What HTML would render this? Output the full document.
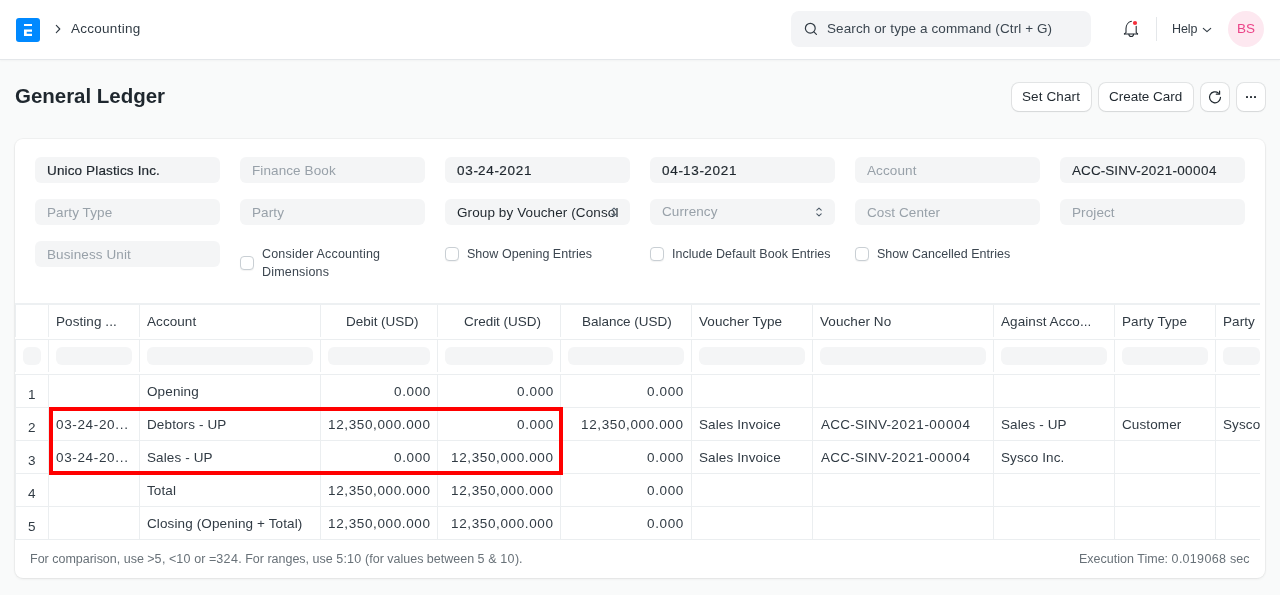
<!DOCTYPE html>
<html>
<head>
<meta charset="utf-8">
<style>
*{box-sizing:border-box;margin:0;padding:0}
html,body{width:1280px;height:595px;overflow:hidden}
body{background:#f9fafa;font-family:"Liberation Sans",sans-serif;color:#1f272e;position:relative}
div,span{white-space:nowrap}
.a{position:absolute;will-change:transform}
.navbar{position:absolute;left:0;top:0;width:1280px;height:60px;background:#fff;border-bottom:1px solid #e4e7ea;box-shadow:0 1px 2px rgba(0,0,0,.03)}
.t13{font-size:13px;line-height:16px}
.t12{font-size:12px;line-height:14px}
.btn{position:absolute;top:83px;height:28px;background:#fff;border-radius:7px;box-shadow:0 0 0 1px rgba(31,39,46,.10),0 1px 2px rgba(0,0,0,.06)}
.card{position:absolute;left:15px;top:139px;width:1250px;height:439px;background:#fff;border-radius:8px;box-shadow:0 0 0 1px rgba(0,0,0,.03),0 1px 3px rgba(0,0,0,.07)}
.inp{position:absolute;width:185px;height:26px;border-radius:6px;background:#f4f5f6}
.ph{color:#a0a8b0}
.cb{position:absolute;width:14px;height:14px;border:1px solid #c9cfd4;border-radius:4px;background:#fff;box-shadow:0 1px 1px rgba(0,0,0,.05)}
.lbl{color:#3c4650}
.hl{position:absolute;background:#ebeef0}
.vl{position:absolute;background:#ebeef0;width:1px}
.pill{position:absolute;height:18px;border-radius:6px;background:#f4f5f6}
.txt{color:#313b44}
</style>
</head>
<body>
<div class="navbar"></div>
<svg class="a" style="left:16px;top:18px" width="24" height="24" viewBox="0 0 24 24"><rect width="24" height="24" rx="3" fill="#0089ff"/><path fill="#fff" d="M8 6h8v2H8zM8 11.5h8v2.2H10.7v2.1H16V18H8z"/></svg>
<svg class="a" style="left:50px;top:20px" width="16" height="18" viewBox="0 0 16 18"><path d="M6.3 5.3L9.8 9L6.3 12.7" fill="none" stroke="#313b44" stroke-width="1.1" stroke-linecap="round" stroke-linejoin="round"/></svg>
<div class="a" style="left:71px;top:21px;font-size:13.5px;line-height:16px;color:#313b44;letter-spacing:0.27px">Accounting</div>
<div class="a" style="left:791px;top:11px;width:300px;height:36px;border-radius:8px;background:#f3f4f6"></div>
<svg class="a" style="left:800px;top:18px" width="20" height="20" viewBox="0 0 20 20"><circle cx="10.3" cy="10.2" r="4.9" fill="none" stroke="#313b44" stroke-width="1.2"/><path d="M13.9 13.8l2.5 2.5" stroke="#313b44" stroke-width="1.2" stroke-linecap="round"/></svg>
<div class="a" style="left:827px;top:21px;font-size:13.5px;line-height:16px;color:#3b4650;letter-spacing:0.1px">Search or type a command (Ctrl + G)</div>
<svg class="a" style="left:1118px;top:14px" width="30" height="30" viewBox="0 0 30 30"><g fill="none" stroke="#1f272e" stroke-width="1.05" stroke-linecap="round" stroke-linejoin="round"><path d="M6.4 19.9L8 18.6V14.5C8 11.3 10.1 8.1 13.4 7.3"/><path d="M18.2 12.2V18.6L19.6 19.9"/><path d="M6.4 19.9H19.6"/><path d="M10.9 20.3a2.3 2.3 0 0 0 4.6 0"/></g><circle cx="17" cy="9" r="2.1" fill="#f52f3a"/></svg>
<div class="a" style="left:1156px;top:17px;width:1px;height:24px;background:#e4e7ea"></div>
<div class="a" style="left:1172px;top:22px;font-size:12.5px;line-height:15px;color:#313b44;letter-spacing:-0.11px">Help</div>
<svg class="a" style="left:1200px;top:24px" width="14" height="10" viewBox="0 0 14 10"><path d="M3.3 4.3l3.7 3.4l3.7-3.4" fill="none" stroke="#313b44" stroke-width="1.1" stroke-linecap="round" stroke-linejoin="round"/></svg>
<div class="a" style="left:1228px;top:11px;width:36px;height:36px;border-radius:50%;background:#fde8f0"></div>
<div class="a" style="left:1237px;top:21px;font-size:13.5px;line-height:16px;color:#ec4388;letter-spacing:0.12px">BS</div>
<div class="a" style="left:15px;top:84px;font-size:20.5px;line-height:23.5px;color:#1f272e;letter-spacing:-0.03px;font-weight:700;line-height:23px">General Ledger</div>
<div class="btn" style="left:1012px;width:79px"></div>
<div class="a" style="left:1022px;top:89px;font-size:13.5px;line-height:16px;color:#1f272e;letter-spacing:0.12px">Set Chart</div>
<div class="btn" style="left:1099px;width:94px"></div>
<div class="a" style="left:1109px;top:89px;font-size:13.5px;line-height:16px;color:#1f272e;letter-spacing:-0.03px">Create Card</div>
<div class="btn" style="left:1201px;width:28px"></div>
<svg class="a" style="left:1200px;top:83px" width="29" height="28" viewBox="0 0 29 28"><path d="M20.5 14.3A5.5 5.5 0 1 1 18.54 10.09" fill="none" stroke="#1f272e" stroke-width="1.2" stroke-linecap="round"/><path d="M16.3 11.2H19.6V8.2" fill="none" stroke="#1f272e" stroke-width="1.2" stroke-linecap="round" stroke-linejoin="round"/></svg>
<div class="btn" style="left:1237px;width:28px"></div>
<svg class="a" style="left:1236px;top:83px" width="29" height="28" viewBox="0 0 29 28"><rect x="10" y="13" width="2" height="2" rx="0.4" fill="#1f272e"/><rect x="14" y="13" width="2" height="2" rx="0.4" fill="#1f272e"/><rect x="18" y="13" width="2" height="2" rx="0.4" fill="#1f272e"/></svg>
<div class="card"></div>
<div class="inp" style="left:35px;top:157px"></div>
<div class="a" style="left:47px;top:163px;font-size:13.5px;line-height:16px;color:#1f272e;letter-spacing:0.14px;-webkit-text-stroke:0.2px #1f272e">Unico Plastics Inc.</div>
<div class="inp" style="left:240px;top:157px"></div>
<div class="a" style="left:252px;top:163px;font-size:13.5px;line-height:16px;color:#98a1a9;letter-spacing:0.1px">Finance Book</div>
<div class="inp" style="left:445px;top:157px"></div>
<div class="a" style="left:457px;top:163px;font-size:13.5px;line-height:16px;color:#1f272e;letter-spacing:0.14px;-webkit-text-stroke:0.2px #1f272e"><span style="letter-spacing:0.72px">03</span>-<span style="letter-spacing:0.72px">24</span>-<span style="letter-spacing:0.72px">2021</span></div>
<div class="inp" style="left:650px;top:157px"></div>
<div class="a" style="left:662px;top:163px;font-size:13.5px;line-height:16px;color:#1f272e;letter-spacing:0.14px;-webkit-text-stroke:0.2px #1f272e"><span style="letter-spacing:0.72px">04</span>-<span style="letter-spacing:0.72px">13</span>-<span style="letter-spacing:0.72px">2021</span></div>
<div class="inp" style="left:855px;top:157px"></div>
<div class="a" style="left:867px;top:163px;font-size:13.5px;line-height:16px;color:#98a1a9;letter-spacing:0.1px">Account</div>
<div class="inp" style="left:1060px;top:157px"></div>
<div class="a" style="left:1072px;top:163px;font-size:13.5px;line-height:16px;color:#1f272e;letter-spacing:0.07px;-webkit-text-stroke:0.1px #1f272e">ACC-SINV-<span style="letter-spacing:0.42px">2021</span>-<span style="letter-spacing:0.42px">00004</span></div>
<div class="inp" style="left:35px;top:199px"></div>
<div class="a" style="left:47px;top:205px;font-size:13.5px;line-height:16px;color:#98a1a9;letter-spacing:0.1px">Party Type</div>
<div class="inp" style="left:240px;top:199px"></div>
<div class="a" style="left:252px;top:205px;font-size:13.5px;line-height:16px;color:#98a1a9;letter-spacing:0.1px">Party</div>
<div class="inp" style="left:445px;top:199px"></div>
<div class="a" style="left:457px;top:205px;width:161px;overflow:hidden;font-size:13.5px;line-height:16px;color:#1f272e;letter-spacing:0.1px">Group by Voucher (Consol</div>
<svg class="a" style="left:607px;top:205px" width="14" height="14" viewBox="0 0 14 14"><path d="M4.8 5.2L7 3.2l2.2 2M4.8 8.8L7 10.8l2.2-2" fill="none" stroke="#4c5a67" stroke-width="1.1" stroke-linecap="round" stroke-linejoin="round"/></svg>
<div class="inp" style="left:650px;top:199px"></div>
<div class="a" style="left:662px;top:204px;font-size:13.5px;line-height:16px;color:#98a1a9;letter-spacing:0.1px">Currency</div>
<svg class="a" style="left:812px;top:205px" width="14" height="14" viewBox="0 0 14 14"><path d="M4.8 5.2L7 3.2l2.2 2M4.8 8.8L7 10.8l2.2-2" fill="none" stroke="#4c5a67" stroke-width="1.1" stroke-linecap="round" stroke-linejoin="round"/></svg>
<div class="inp" style="left:855px;top:199px"></div>
<div class="a" style="left:867px;top:205px;font-size:13.5px;line-height:16px;color:#98a1a9;letter-spacing:0.1px">Cost Center</div>
<div class="inp" style="left:1060px;top:199px"></div>
<div class="a" style="left:1072px;top:205px;font-size:13.5px;line-height:16px;color:#98a1a9;letter-spacing:0.1px">Project</div>
<div class="inp" style="left:35px;top:241px"></div>
<div class="a" style="left:47px;top:247px;font-size:13.5px;line-height:16px;color:#98a1a9;letter-spacing:0.1px">Business Unit</div>
<div class="cb" style="left:240px;top:256px"></div>
<div class="a" style="left:262px;top:247px;font-size:12.5px;line-height:15px;color:#3c4650;letter-spacing:0.19px">Consider Accounting</div>
<div class="a" style="left:262px;top:265px;font-size:12.5px;line-height:15px;color:#3c4650;letter-spacing:0.19px">Dimensions</div>
<div class="cb" style="left:445px;top:247px"></div>
<div class="a" style="left:467px;top:247px;font-size:12.5px;line-height:15px;color:#3c4650;letter-spacing:0.03px">Show Opening Entries</div>
<div class="cb" style="left:650px;top:247px"></div>
<div class="a" style="left:672px;top:247px;font-size:12.5px;line-height:15px;color:#3c4650;letter-spacing:0.03px">Include Default Book Entries</div>
<div class="cb" style="left:855px;top:247px"></div>
<div class="a" style="left:877px;top:247px;font-size:12.5px;line-height:15px;color:#3c4650;letter-spacing:0.03px">Show Cancelled Entries</div>
<div class="hl" style="left:15px;top:303px;width:1245px;height:2px;background:#edf0f2"></div>
<div class="hl" style="left:15px;top:339px;width:1245px;height:1px"></div>
<div class="hl" style="left:15px;top:374px;width:1245px;height:1px"></div>
<div class="hl" style="left:15px;top:407px;width:1245px;height:1px"></div>
<div class="hl" style="left:15px;top:440px;width:1245px;height:1px"></div>
<div class="hl" style="left:15px;top:473px;width:1245px;height:1px"></div>
<div class="hl" style="left:15px;top:506px;width:1245px;height:1px"></div>
<div class="hl" style="left:15px;top:539px;width:1245px;height:1px"></div>
<div class="vl" style="left:15px;top:305px;height:32px"></div>
<div class="vl" style="left:15px;top:340px;height:32px"></div>
<div class="vl" style="left:15px;top:374px;height:165px"></div>
<div class="vl" style="left:48px;top:305px;height:32px"></div>
<div class="vl" style="left:48px;top:340px;height:32px"></div>
<div class="vl" style="left:48px;top:374px;height:165px"></div>
<div class="vl" style="left:139px;top:305px;height:32px"></div>
<div class="vl" style="left:139px;top:340px;height:32px"></div>
<div class="vl" style="left:139px;top:374px;height:165px"></div>
<div class="vl" style="left:320px;top:305px;height:32px"></div>
<div class="vl" style="left:320px;top:340px;height:32px"></div>
<div class="vl" style="left:320px;top:374px;height:165px"></div>
<div class="vl" style="left:437px;top:305px;height:32px"></div>
<div class="vl" style="left:437px;top:340px;height:32px"></div>
<div class="vl" style="left:437px;top:374px;height:165px"></div>
<div class="vl" style="left:560px;top:305px;height:32px"></div>
<div class="vl" style="left:560px;top:340px;height:32px"></div>
<div class="vl" style="left:560px;top:374px;height:165px"></div>
<div class="vl" style="left:691px;top:305px;height:32px"></div>
<div class="vl" style="left:691px;top:340px;height:32px"></div>
<div class="vl" style="left:691px;top:374px;height:165px"></div>
<div class="vl" style="left:812px;top:305px;height:32px"></div>
<div class="vl" style="left:812px;top:340px;height:32px"></div>
<div class="vl" style="left:812px;top:374px;height:165px"></div>
<div class="vl" style="left:993px;top:305px;height:32px"></div>
<div class="vl" style="left:993px;top:340px;height:32px"></div>
<div class="vl" style="left:993px;top:374px;height:165px"></div>
<div class="vl" style="left:1114px;top:305px;height:32px"></div>
<div class="vl" style="left:1114px;top:340px;height:32px"></div>
<div class="vl" style="left:1114px;top:374px;height:165px"></div>
<div class="vl" style="left:1215px;top:305px;height:32px"></div>
<div class="vl" style="left:1215px;top:340px;height:32px"></div>
<div class="vl" style="left:1215px;top:374px;height:165px"></div>
<div class="a" style="left:56px;top:314px;font-size:13.5px;line-height:16px;color:#313b44;letter-spacing:0.07px">Posting ...</div>
<div class="a" style="left:147px;top:314px;font-size:13.5px;line-height:16px;color:#313b44;letter-spacing:0.07px">Account</div>
<div class="a" style="right:862px;top:314px;margin-right:--0.03px;font-size:13.5px;line-height:16px;color:#313b44;letter-spacing:-0.03px">Debit (USD)</div>
<div class="a" style="right:739px;top:314px;margin-right:--0.03px;font-size:13.5px;line-height:16px;color:#313b44;letter-spacing:-0.03px">Credit (USD)</div>
<div class="a" style="right:608px;top:314px;margin-right:--0.03px;font-size:13.5px;line-height:16px;color:#313b44;letter-spacing:-0.03px">Balance (USD)</div>
<div class="a" style="left:699px;top:314px;font-size:13.5px;line-height:16px;color:#313b44;letter-spacing:0.07px">Voucher Type</div>
<div class="a" style="left:820px;top:314px;font-size:13.5px;line-height:16px;color:#313b44;letter-spacing:0.07px">Voucher No</div>
<div class="a" style="left:1001px;top:314px;font-size:13.5px;line-height:16px;color:#313b44;letter-spacing:0.07px">Against Acco...</div>
<div class="a" style="left:1122px;top:314px;font-size:13.5px;line-height:16px;color:#313b44;letter-spacing:0.07px">Party Type</div>
<div class="a" style="left:1223px;top:314px;font-size:13.5px;line-height:16px;color:#313b44;letter-spacing:0.07px">Party</div>
<div class="pill" style="left:23px;top:347px;width:18px"></div>
<div class="pill" style="left:56px;top:347px;width:76px"></div>
<div class="pill" style="left:147px;top:347px;width:166px"></div>
<div class="pill" style="left:328px;top:347px;width:102px"></div>
<div class="pill" style="left:445px;top:347px;width:108px"></div>
<div class="pill" style="left:568px;top:347px;width:116px"></div>
<div class="pill" style="left:699px;top:347px;width:106px"></div>
<div class="pill" style="left:820px;top:347px;width:166px"></div>
<div class="pill" style="left:1001px;top:347px;width:106px"></div>
<div class="pill" style="left:1122px;top:347px;width:86px"></div>
<div class="pill" style="left:1223px;top:347px;width:37px"></div>
<div class="a" style="left:1260px;top:300px;width:5px;height:240px;background:#fff"></div>
<div class="a" style="left:28px;top:387px;font-size:13.5px;line-height:16px;color:#313b44;letter-spacing:0.07px"><span style="letter-spacing:0.62px">1</span></div>
<div class="a" style="left:147px;top:383.5px;font-size:13.5px;line-height:16px;color:#313b44;letter-spacing:0.12px">Opening</div>
<div class="a" style="right:850px;top:383.5px;margin-right:-0.62px;font-size:13.5px;line-height:16px;color:#313b44;letter-spacing:0.62px">0.000</div>
<div class="a" style="right:727px;top:383.5px;margin-right:-0.62px;font-size:13.5px;line-height:16px;color:#313b44;letter-spacing:0.62px">0.000</div>
<div class="a" style="right:597px;top:383.5px;margin-right:-0.62px;font-size:13.5px;line-height:16px;color:#313b44;letter-spacing:0.62px">0.000</div>
<div class="a" style="left:28px;top:420px;font-size:13.5px;line-height:16px;color:#313b44;letter-spacing:0.07px"><span style="letter-spacing:0.62px">2</span></div>
<div class="a" style="left:56px;top:416.5px;font-size:13.5px;line-height:16px;color:#313b44;letter-spacing:0.72px"><span style="letter-spacing:0.62px">03</span>-<span style="letter-spacing:0.62px">24</span>-<span style="letter-spacing:0.62px">20</span>...</div>
<div class="a" style="left:147px;top:416.5px;font-size:13.5px;line-height:16px;color:#313b44;letter-spacing:0.12px">Debtors - UP</div>
<div class="a" style="right:850px;top:416.5px;margin-right:-0.62px;font-size:13.5px;line-height:16px;color:#313b44;letter-spacing:0.62px">12,350,000.000</div>
<div class="a" style="right:727px;top:416.5px;margin-right:-0.62px;font-size:13.5px;line-height:16px;color:#313b44;letter-spacing:0.62px">0.000</div>
<div class="a" style="right:597px;top:416.5px;margin-right:-0.62px;font-size:13.5px;line-height:16px;color:#313b44;letter-spacing:0.62px">12,350,000.000</div>
<div class="a" style="left:699px;top:416.5px;font-size:13.5px;line-height:16px;color:#313b44;letter-spacing:0.12px">Sales Invoice</div>
<div class="a" style="left:821px;top:416.5px;font-size:13.5px;line-height:16px;color:#313b44;letter-spacing:0.22px">ACC-SINV-<span style="letter-spacing:0.82px">2021</span>-<span style="letter-spacing:0.82px">00004</span></div>
<div class="a" style="left:1001px;top:416.5px;font-size:13.5px;line-height:16px;color:#313b44;letter-spacing:0.12px">Sales - UP</div>
<div class="a" style="left:1122px;top:416.5px;font-size:13.5px;line-height:16px;color:#313b44;letter-spacing:0.12px">Customer</div>
<div class="a" style="left:1223px;top:416.5px;font-size:13.5px;line-height:16px;color:#313b44;letter-spacing:0.12px">Sysco</div>
<div class="a" style="left:28px;top:453px;font-size:13.5px;line-height:16px;color:#313b44;letter-spacing:0.07px"><span style="letter-spacing:0.62px">3</span></div>
<div class="a" style="left:56px;top:449.5px;font-size:13.5px;line-height:16px;color:#313b44;letter-spacing:0.72px"><span style="letter-spacing:0.62px">03</span>-<span style="letter-spacing:0.62px">24</span>-<span style="letter-spacing:0.62px">20</span>...</div>
<div class="a" style="left:147px;top:449.5px;font-size:13.5px;line-height:16px;color:#313b44;letter-spacing:0.12px">Sales - UP</div>
<div class="a" style="right:850px;top:449.5px;margin-right:-0.62px;font-size:13.5px;line-height:16px;color:#313b44;letter-spacing:0.62px">0.000</div>
<div class="a" style="right:727px;top:449.5px;margin-right:-0.62px;font-size:13.5px;line-height:16px;color:#313b44;letter-spacing:0.62px">12,350,000.000</div>
<div class="a" style="right:597px;top:449.5px;margin-right:-0.62px;font-size:13.5px;line-height:16px;color:#313b44;letter-spacing:0.62px">0.000</div>
<div class="a" style="left:699px;top:449.5px;font-size:13.5px;line-height:16px;color:#313b44;letter-spacing:0.12px">Sales Invoice</div>
<div class="a" style="left:821px;top:449.5px;font-size:13.5px;line-height:16px;color:#313b44;letter-spacing:0.22px">ACC-SINV-<span style="letter-spacing:0.82px">2021</span>-<span style="letter-spacing:0.82px">00004</span></div>
<div class="a" style="left:1001px;top:449.5px;font-size:13.5px;line-height:16px;color:#313b44;letter-spacing:0.12px">Sysco Inc.</div>
<div class="a" style="left:28px;top:486px;font-size:13.5px;line-height:16px;color:#313b44;letter-spacing:0.07px"><span style="letter-spacing:0.62px">4</span></div>
<div class="a" style="left:147px;top:482.5px;font-size:13.5px;line-height:16px;color:#313b44;letter-spacing:0.12px">Total</div>
<div class="a" style="right:850px;top:482.5px;margin-right:-0.62px;font-size:13.5px;line-height:16px;color:#313b44;letter-spacing:0.62px">12,350,000.000</div>
<div class="a" style="right:727px;top:482.5px;margin-right:-0.62px;font-size:13.5px;line-height:16px;color:#313b44;letter-spacing:0.62px">12,350,000.000</div>
<div class="a" style="right:597px;top:482.5px;margin-right:-0.62px;font-size:13.5px;line-height:16px;color:#313b44;letter-spacing:0.62px">0.000</div>
<div class="a" style="left:28px;top:519px;font-size:13.5px;line-height:16px;color:#313b44;letter-spacing:0.07px"><span style="letter-spacing:0.62px">5</span></div>
<div class="a" style="left:147px;top:515.5px;font-size:13.5px;line-height:16px;color:#313b44;letter-spacing:0.12px">Closing (Opening + Total)</div>
<div class="a" style="right:850px;top:515.5px;margin-right:-0.62px;font-size:13.5px;line-height:16px;color:#313b44;letter-spacing:0.62px">12,350,000.000</div>
<div class="a" style="right:727px;top:515.5px;margin-right:-0.62px;font-size:13.5px;line-height:16px;color:#313b44;letter-spacing:0.62px">12,350,000.000</div>
<div class="a" style="right:597px;top:515.5px;margin-right:-0.62px;font-size:13.5px;line-height:16px;color:#313b44;letter-spacing:0.62px">0.000</div>
<div class="a" style="left:49px;top:407px;width:514px;height:68px;border:4px solid #ff0000"></div>
<div class="a" style="left:30px;top:552px;font-size:12.5px;line-height:15px;color:#687178;letter-spacing:-0.005px">For comparison, use &gt;<span style="letter-spacing:0.39px">5</span>, &lt;<span style="letter-spacing:0.39px">10</span> or =<span style="letter-spacing:0.39px">324</span>. For ranges, use <span style="letter-spacing:0.39px">5</span>:<span style="letter-spacing:0.39px">10</span> (for values between <span style="letter-spacing:0.39px">5</span> &amp; <span style="letter-spacing:0.39px">10</span>).</div>
<div class="a" style="right:31px;top:552px;margin-right:-0.010000000000000009px;font-size:12.5px;line-height:15px;color:#687178;letter-spacing:0.01px">Execution Time: <span style="letter-spacing:0.39px">0</span>.<span style="letter-spacing:0.39px">019068</span> sec</div>
</body>
</html>
